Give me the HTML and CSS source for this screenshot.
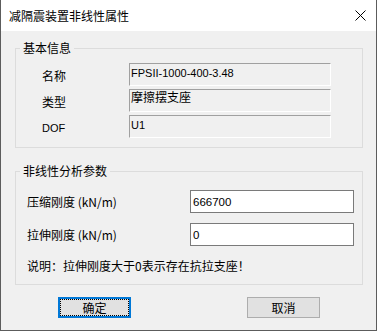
FILE: index.html
```html
<!DOCTYPE html>
<html lang="zh-CN">
<head>
    <meta charset="UTF-8">
    <title>减隔震装置非线性属性</title>
    <link rel="stylesheet" href="styles.css">
</head>
<body>
    <div class="window">
        <div class="titlebar">
            <span class="title">减隔震装置非线性属性</span>
            <svg class="close" width="11" height="11" viewBox="0 0 11 11">
                <path d="M0.5 0.5 L10.5 10.5 M10.5 0.5 L0.5 10.5" stroke="#000" stroke-width="1" fill="none"/>
            </svg>
        </div>
        <div class="client">
            <fieldset class="group group-info">
                <legend>基本信息</legend>
                <div class="info-grid">
                    <span class="info-label">名称</span>
                    <div class="readonly latin">FPSII-1000-400-3.48</div>
                    <span class="info-label">类型</span>
                    <div class="readonly">摩擦摆支座</div>
                    <span class="info-label latin-label">DOF</span>
                    <div class="readonly latin">U1</div>
                </div>
            </fieldset>

            <fieldset class="group group-params">
                <legend>非线性分析参数</legend>
                <div class="param-row">
                    <label for="comp">压缩刚度 (kN/m)</label>
                    <input type="text" id="comp" class="edit" value="666700">
                </div>
                <div class="param-row">
                    <label for="tens">拉伸刚度 (kN/m)</label>
                    <input type="text" id="tens" class="edit" value="0">
                </div>
                <p class="note">说明：拉伸刚度大于0表示存在抗拉支座！</p>
            </fieldset>

            <div class="buttons">
                <button type="button" class="btn btn-default">确定</button>
                <button type="button" class="btn btn-cancel">取消</button>
            </div>
        </div>
    </div>
</body>
</html>
```

FILE: styles.css
```css
body {
    margin: 0;
    font-family: "Noto Sans CJK SC", sans-serif;
    font-size: 12px;
    color: #000;
}

.window {
    width: 377px;
    height: 331px;
    box-sizing: border-box;
    border: 1px solid #5c5c5c;
    border-top: none;
    background-color: #f0f0f0;
}

.titlebar {
    height: 31px;
    background-color: #fff;
    display: flex;
    align-items: center;
    padding-left: 8px;
}

.title {
    font-size: 12px;
    line-height: 14px;
    flex: 1;
}

.close {
    margin-right: 10px;
}

.client {
    padding: 10px 13px 0 14px;
}

.group {
    margin: 0;
    padding: 8px 4px 9px 4px;
    border: 1px solid #dcdcdc;
    min-width: 0;
}

.group legend {
    padding: 0 3px;
    font-size: 12px;
    line-height: 14px;
}

.info-grid {
    display: grid;
    grid-template-columns: 87px 202px;
    grid-auto-rows: 23px;
    row-gap: 3px;
    padding-left: 22px;
}

.info-label {
    align-self: center;
    padding-top: 3px;
    line-height: 14px;
}

.latin-label {
    font-family: "Liberation Sans", sans-serif;
    font-size: 11px;
}

.readonly {
    box-sizing: border-box;
    border-top: 1px solid #a0a0a0;
    border-left: 1px solid #a0a0a0;
    border-bottom: 1px solid #fff;
    border-right: 1px solid #fff;
    padding: 0 1px;
    line-height: 14px;
    white-space: nowrap;
    overflow: hidden;
}

.latin {
    font-family: "Liberation Sans", sans-serif;
    font-size: 11px;
    padding-top: 2px;
}

.group-params {
    margin-top: 16px;
    padding-top: 12px;
    padding-bottom: 10px;
}

.param-row {
    display: flex;
    align-items: center;
    height: 23px;
    padding-left: 7px;
}

.param-row + .param-row {
    margin-top: 10px;
}

.param-row label {
    width: 163px;
    line-height: 14px;
}

.edit {
    width: 164px;
    height: 23px;
    box-sizing: border-box;
    margin: 0;
    border: 1px solid #7a7a7a;
    padding: 0 2px;
    background-color: #fff;
    font-family: "Liberation Sans", sans-serif;
    font-size: 11.5px;
    outline: none;
}

.note {
    margin: 12px 0 0 7px;
    line-height: 16px;
}

.buttons {
    display: flex;
    margin-top: 12px;
    padding-left: 43px;
}

.btn {
    width: 73px;
    height: 21px;
    box-sizing: border-box;
    padding: 0;
    background-color: #e1e1e1;
    border: 1px solid #adadad;
    font-family: "Noto Sans CJK SC", sans-serif;
    font-size: 12px;
    line-height: 14px;
    color: #000;
}

.btn-default {
    border: 2px solid #0078d7;
    outline: 1px dotted #000;
    outline-offset: -3px;
}

.btn-cancel {
    margin-left: 116px;
}
```
